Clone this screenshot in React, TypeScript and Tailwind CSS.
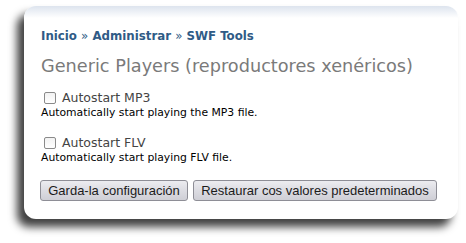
import React from 'react';

const Option: React.FC<{ label: string; help: string }> = ({ label, help }) => (
  <div className="flex flex-col">
    <label className="flex items-center gap-[6px] text-[12.5px] leading-[16px] text-[#444]">
      <span className="ml-[3px] inline-block w-[12px] h-[12px] border border-[#8a8a8a] rounded-[2px] bg-gradient-to-b from-[#f2f2f2] to-[#ffffff]" />
      {label}
    </label>
    <p className="text-[10.8px] leading-[12px] text-black mt-[1px] whitespace-nowrap">{help}</p>
  </div>
);

const Button: React.FC<{ children: React.ReactNode; w: string }> = ({ children, w }) => (
  <button
    className={`${w} shrink-0 whitespace-nowrap h-[21px] border border-[#8e8e96] rounded-[3px] bg-gradient-to-b from-[#ececf0] via-[#dcdce2] to-[#cfcfd6] text-[13px] leading-[19px] text-[#1b1b1b] font-['Liberation_Sans',Arial,sans-serif]`}
  >
    {children}
  </button>
);

export default function App() {
  return (
    <div className="w-[466px] h-[243px] bg-white pt-[6px] pl-[24px] font-['DejaVu_Sans',Verdana,sans-serif]">
      <div className="relative w-[434px] h-[213px] bg-white rounded-[12px] shadow-[-7px_8px_8px_rgba(0,0,0,0.75)] overflow-hidden">
        <div className="h-[12px] bg-gradient-to-b from-[#dde4ee] to-white" />
        <div className="px-[17px] pt-[11px]">
          <nav className="text-[11.8px] leading-[14px] font-bold text-[#2f5b86] whitespace-nowrap">
            Inicio <span className="font-normal">»</span> Administrar <span className="font-normal">»</span> SWF Tools
          </nav>
          <h1 className="mt-[13px] text-[17.7px] leading-[20px] text-[#7a7a7a] whitespace-nowrap">Generic Players (reproductores xenéricos)</h1>
          <div className="mt-[14px] flex flex-col gap-[16px]">
            <Option label="Autostart MP3" help="Automatically start playing the MP3 file." />
            <Option label="Autostart FLV" help="Automatically start playing FLV file." />
          </div>
          <div className="mt-[16px] flex gap-[5px] -ml-[1px]">
            <Button w="w-[148px]">Garda-la configuración</Button>
            <Button w="w-[244px]">Restaurar cos valores predeterminados</Button>
          </div>
        </div>
      </div>
    </div>
  );
}
